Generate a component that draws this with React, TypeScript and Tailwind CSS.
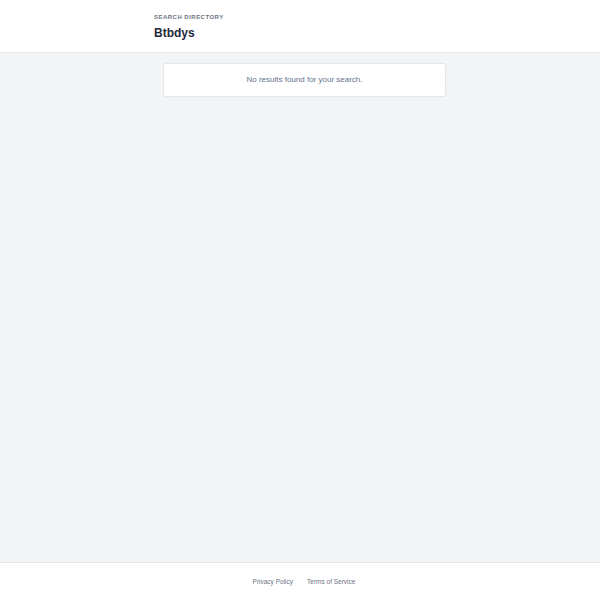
export default function App() {
  return (
    <div className="flex min-h-[600px] flex-col bg-[#f3f4f6] font-['Liberation_Sans',Arial,sans-serif]">
      <header className="h-[53px] border-b border-[#e5e7eb] bg-white">
        <div className="ml-[154px] pt-[13px]">
          <p className="text-[6px] font-bold uppercase leading-[8px] tracking-[0.08em] text-[#6b7280]">
            Search Directory
          </p>
          <h1 className="mt-[4px] text-[12px] font-bold leading-[16px] text-[#1e293b]">Btbdys</h1>
        </div>
      </header>

      <main className="flex-1">
        <div className="ml-[163px] mt-[10px] w-[283px] rounded-[2px] border border-[#e5e7eb] bg-white py-[11px] text-center">
          <p className="text-[8px] leading-[10px] text-[#64748b]">No results found for your search.</p>
        </div>
      </main>

      <footer className="h-[38px] border-t border-[#e5e7eb] bg-white">
        <div className="flex h-full items-center justify-center gap-[14px] pl-[8px] text-[6.5px] text-[#6b7280]">
          <a href="#">Privacy Policy</a>
          <a href="#">Terms of Service</a>
        </div>
      </footer>
    </div>
  );
}
